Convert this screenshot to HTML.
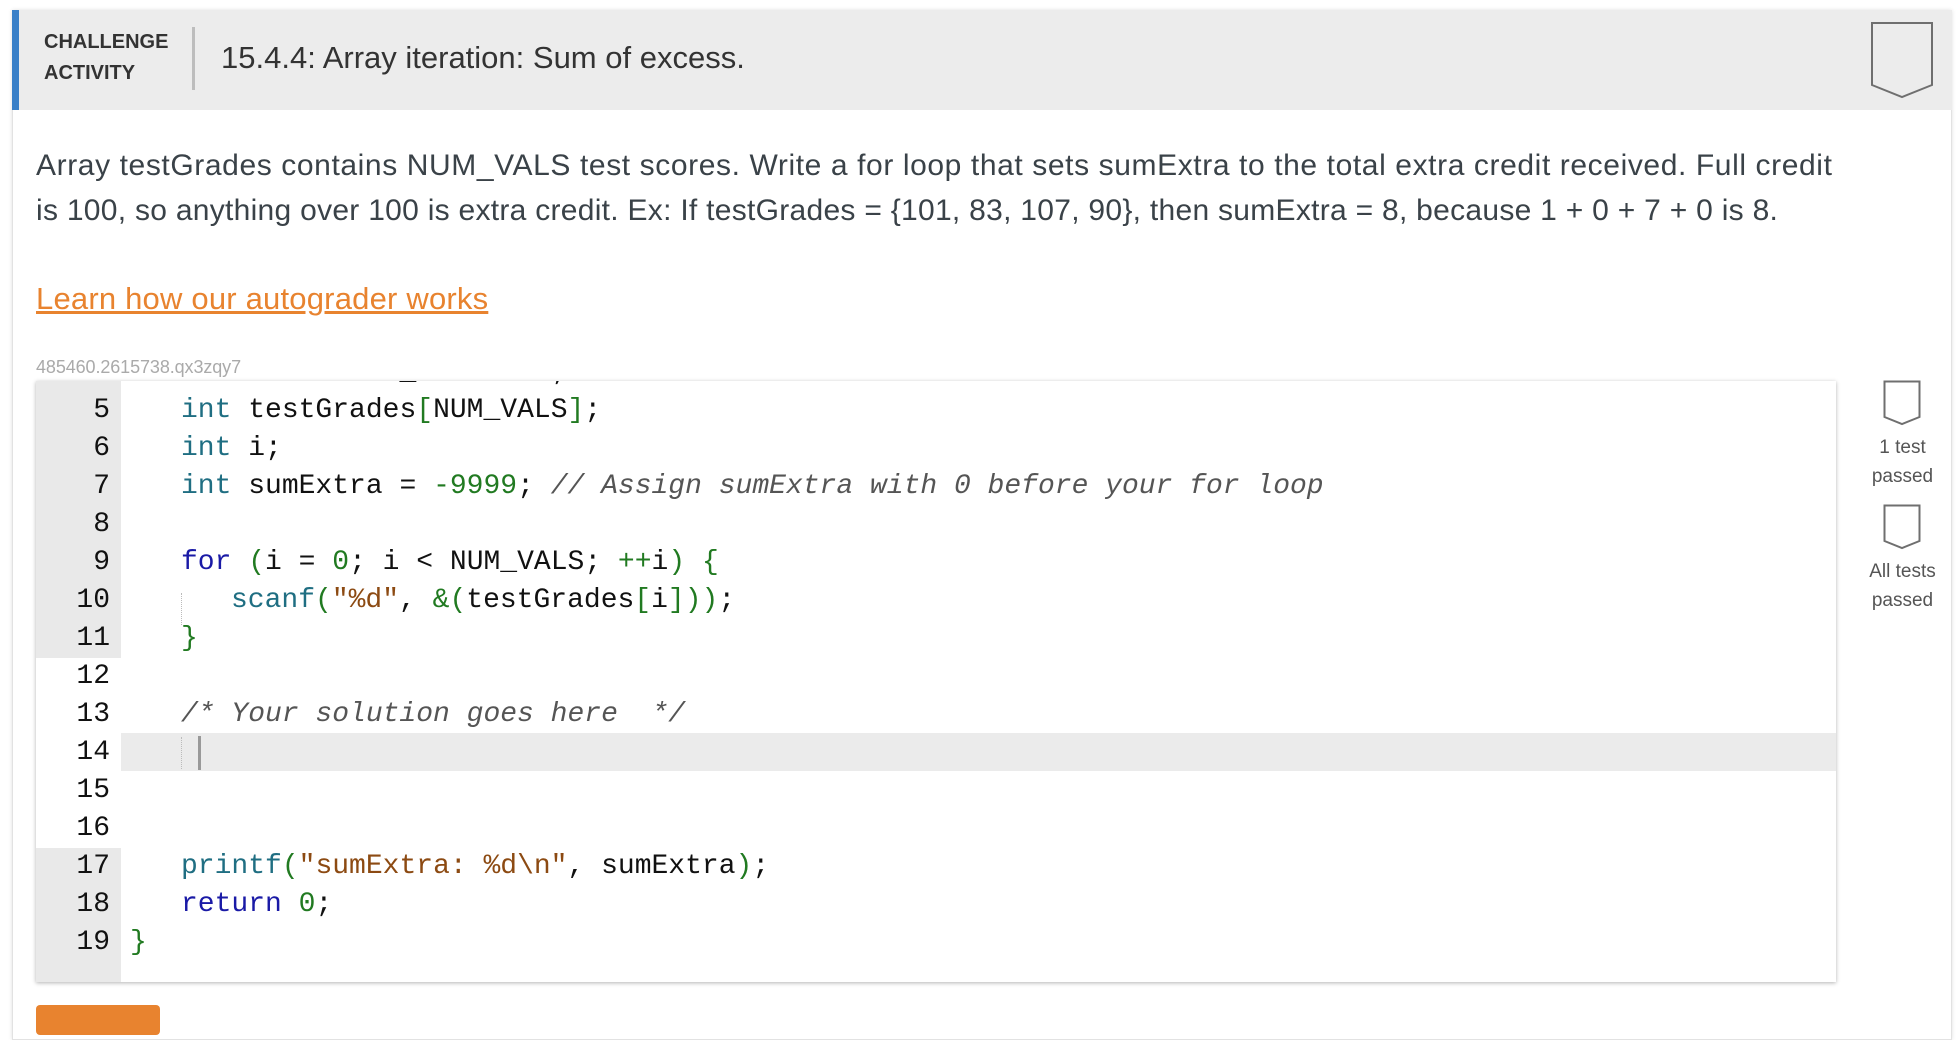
<!DOCTYPE html>
<html><head><meta charset="utf-8"><style>
*{margin:0;padding:0;box-sizing:border-box}
body{width:1958px;height:1022px;background:#fff;font-family:"Liberation Sans",sans-serif;position:relative;overflow:hidden}
.card{position:absolute;left:12px;top:10px;width:1940px;height:1030px;border:1px solid #e2e2e2;box-shadow:0 0 4px rgba(0,0,0,.12);background:#fff}
.hdr{position:absolute;left:12px;top:10px;width:1940px;height:100px;background:#ececec}
.blue{position:absolute;left:12px;top:10px;width:7px;height:100px;background:#3a80c8}
.ca{position:absolute;left:44px;top:27px;font-weight:bold;font-size:20px;line-height:31px;color:#333}
.div{position:absolute;left:192px;top:27px;width:3px;height:63px;background:#bdbdbd}
.title{position:absolute;left:221px;top:40px;font-size:31px;color:#333;letter-spacing:0}
.desc{position:absolute;left:36px;top:143px;font-size:30px;line-height:45px;color:#3a4248;letter-spacing:0.6px;white-space:nowrap}
.link{position:absolute;left:36px;top:281px;font-size:31px;color:#e8832f;text-decoration:underline;letter-spacing:0.2px}
.id{position:absolute;left:36px;top:357px;font-size:18px;color:#aaa;letter-spacing:-0.1px}
.ed{position:absolute;left:36px;top:381px;width:1800px;height:601px;background:#fff;box-shadow:0 1px 4px rgba(0,0,0,.3);overflow:hidden}
.ln{position:absolute;left:0;width:1800px;height:38px;font-family:"Liberation Mono",monospace;font-size:28px;line-height:38px;white-space:pre;color:#111}
.g{position:absolute;left:0;top:0;width:85px;height:38px;text-align:right;padding-right:11px;color:#111}
.c{position:absolute;left:145px;top:0}
.k{color:#1f6e82}.b{color:#1a1aa6}.n{color:#217a21}.s{color:#8c4a12}.cm{color:#555;font-style:italic}.p{color:#217a21}
.bm{position:absolute}
.side{position:absolute;left:1860px;width:85px;text-align:center;font-size:19px;color:#555;line-height:29px}
</style></head><body>
<div class="card"></div>
<div class="hdr"></div>
<div class="blue"></div>
<div class="ca">CHALLENGE<br>ACTIVITY</div>
<div class="div"></div>
<div class="title">15.4.4: Array iteration: Sum of excess.</div>
<svg class="bm" style="left:1870px;top:21px" width="64" height="78"><path d="M2 2 H62 V64 L32 76 L2 64 Z" fill="none" stroke="#6f6f6f" stroke-width="2"/></svg>
<div class="desc">Array testGrades contains NUM_VALS test scores. Write a for loop that sets sumExtra to the total extra credit received. Full credit<br><span style="letter-spacing:0.28px">is 100, so anything over 100 is extra credit. Ex: If testGrades = {101, 83, 107, 90}, then sumExtra = 8, because 1 + 0 + 7 + 0 is 8.</span></div>
<div class="link">Learn how our autograder works</div>
<div class="id">485460.2615738.qx3zqy7</div>
<div class="ed">
<div style="position:absolute;left:0;top:0;width:85px;height:277px;background:#e9e9e9"></div>
<div style="position:absolute;left:0;top:467px;width:85px;height:140px;background:#e9e9e9"></div>
<div style="position:absolute;left:85px;top:352px;width:1715px;height:38px;background:#ebebeb"></div>
<div class="ln" style="top:-27px"><span class="g">4</span><span class="c"><span class="b">const</span> <span class="k">int</span> NUM_VALS = <span class="n">4</span>;</span></div>
<div class="ln" style="top:11px"><span class="g">5</span><span class="c"><span class="k">int</span> testGrades<span class="p">[</span>NUM_VALS<span class="p">]</span>;</span></div>
<div class="ln" style="top:49px"><span class="g">6</span><span class="c"><span class="k">int</span> i;</span></div>
<div class="ln" style="top:87px"><span class="g">7</span><span class="c"><span class="k">int</span> sumExtra = <span class="n">-9999</span>; <span class="cm">// Assign sumExtra with 0 before your for loop</span></span></div>
<div class="ln" style="top:125px"><span class="g">8</span></div>
<div class="ln" style="top:163px"><span class="g">9</span><span class="c"><span class="b">for</span> <span class="p">(</span>i = <span class="n">0</span>; i &lt; NUM_VALS; <span class="p">++</span>i<span class="p">)</span> <span class="p">{</span></span></div>
<div class="ln" style="top:201px"><span class="g">10</span><span class="c" style="left:195px"><span class="k">scanf</span><span class="p">(</span><span class="s">"%d"</span>, <span class="p">&amp;(</span>testGrades<span class="p">[</span>i<span class="p">]))</span>;</span></div>
<div class="ln" style="top:239px"><span class="g">11</span><span class="c"><span class="p">}</span></span></div>
<div class="ln" style="top:277px"><span class="g">12</span></div>
<div class="ln" style="top:315px"><span class="g">13</span><span class="c"><span class="cm">/* Your solution goes here  */</span></span></div>
<div class="ln" style="top:353px"><span class="g">14</span></div>
<div class="ln" style="top:391px"><span class="g">15</span></div>
<div class="ln" style="top:429px"><span class="g">16</span></div>
<div class="ln" style="top:467px"><span class="g">17</span><span class="c"><span class="k">printf</span><span class="p">(</span><span class="s">"sumExtra: %d\n"</span>, sumExtra<span class="p">)</span>;</span></div>
<div class="ln" style="top:505px"><span class="g">18</span><span class="c"><span class="b">return</span> <span class="n">0</span>;</span></div>
<div class="ln" style="top:543px"><span class="g">19</span><span class="c" style="left:94px"><span class="p">}</span></span></div>
<div style="position:absolute;left:145px;top:212px;height:32px;border-left:1px dotted #bbb"></div>
<div style="position:absolute;left:145px;top:356px;height:32px;border-left:1px dotted #bbb"></div>
<div style="position:absolute;left:162px;top:355px;width:3px;height:34px;background:#999"></div>
</div>
<svg class="bm" style="left:1883px;top:380px" width="38" height="46"><path d="M1.5 1.5 H36.5 V37 L19 44 L1.5 37 Z" fill="none" stroke="#6f6f6f" stroke-width="2"/></svg>
<div class="side" style="top:433px">1 test<br>passed</div>
<svg class="bm" style="left:1883px;top:504px" width="38" height="46"><path d="M1.5 1.5 H36.5 V37 L19 44 L1.5 37 Z" fill="none" stroke="#6f6f6f" stroke-width="2"/></svg>
<div class="side" style="top:557px">All tests<br>passed</div>
<div style="position:absolute;left:36px;top:1005px;width:124px;height:30px;background:#e8832f;border-radius:4px"></div>
</body></html>
